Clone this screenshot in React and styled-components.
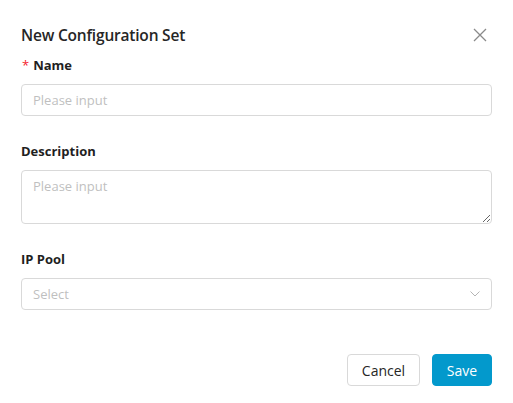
import React from "react";
import styled, { createGlobalStyle } from "styled-components";

const GlobalStyle = createGlobalStyle`
  html, body {
    margin: 0;
    padding: 0;
    background: #ffffff;
  }
  body {
    font-family: "Open Sans", "Noto Sans", sans-serif;
    color: #1f1f1f;
  }
  * {
    box-sizing: border-box;
  }
`;

const App = () => {
  return (
    <>
      <GlobalStyle />
      <Dialog>
        <Header>
          <Title>New Configuration Set</Title>
          <CloseButton aria-label="close">
            <svg width="14" height="14" viewBox="0 0 14 14">
              <path
                d="M1 1 L13 13 M13 1 L1 13"
                stroke="#8a8a8a"
                strokeWidth="1.3"
                fill="none"
              />
            </svg>
          </CloseButton>
        </Header>

        <FormItem>
          <Label required>Name</Label>
          <Input placeholder="Please input" />
        </FormItem>

        <FormItem>
          <Label>Description</Label>
          <TextArea placeholder="Please input" />
        </FormItem>

        <FormItem>
          <Label>IP Pool</Label>
          <SelectBox>
            <SelectText>Select</SelectText>
            <svg width="10" height="6" viewBox="0 0 10 6">
              <path
                d="M0.5 0.5 L5 5 L9.5 0.5"
                stroke="#b5b5b5"
                strokeWidth="1"
                fill="none"
              />
            </svg>
          </SelectBox>
        </FormItem>

        <Footer>
          <Button>Cancel</Button>
          <Button primary>Save</Button>
        </Footer>
      </Dialog>
    </>
  );
};

const Dialog = styled.div`
  width: 513px;
  height: 403px;
  padding: 24px 21px 0 21px;
  display: flex;
  flex-direction: column;
`;

const Header = styled.div`
  display: flex;
  justify-content: space-between;
  align-items: center;
  height: 22px;
  margin-bottom: 9px;
`;

const Title = styled.div`
  font-size: 15.5px;
  font-weight: 600;
  color: #262626;
  letter-spacing: -0.2px;
`;

const CloseButton = styled.button`
  border: none;
  background: none;
  padding: 0;
  margin-right: 5px;
  display: flex;
  cursor: pointer;
`;

const FormItem = styled.div`
  display: flex;
  flex-direction: column;
  margin-bottom: 25px;
`;

const Label = styled.label`
  height: 20px;
  line-height: 20px;
  font-size: 13px;
  font-weight: 700;
  color: #1f1f1f;
  margin-bottom: 9px;
  &::before {
    content: ${(p) => (p.required ? '"*"' : "none")};
    color: #f5222d;
    font-weight: 400;
    margin-right: 4px;
    margin-left: 1px;
  }
`;

const fieldStyle = `
  width: 100%;
  border: 1px solid #d9d9d9;
  border-radius: 4px;
  background: #ffffff;
  font-family: "Open Sans", "Noto Sans", sans-serif;
  font-size: 13px;
  color: #1f1f1f;
  outline: none;
`;

const Input = styled.input`
  ${fieldStyle}
  height: 32px;
  padding: 0 11px;
  &::placeholder {
    color: #bfbfbf;
  }
`;

const TextArea = styled.textarea`
  ${fieldStyle}
  display: block;
  height: 54px;
  padding: 6px 11px;
  resize: vertical;
  &::placeholder {
    color: #bfbfbf;
  }
`;

const SelectBox = styled.div`
  ${fieldStyle}
  height: 32px;
  padding: 0 11px 0 11px;
  display: flex;
  align-items: center;
  justify-content: space-between;
`;

const SelectText = styled.span`
  color: #bfbfbf;
`;

const Footer = styled.div`
  display: flex;
  justify-content: flex-end;
  gap: 12px;
  margin-top: 19px;
`;

const Button = styled.button`
  height: 32px;
  width: ${(p) => (p.primary ? "60px" : "73px")};
  padding: 0;
  border-radius: 4px;
  font-family: "Open Sans", "Noto Sans", sans-serif;
  font-size: 14px;
  cursor: pointer;
  border: 1px solid ${(p) => (p.primary ? "#0399cc" : "#d9d9d9")};
  background: ${(p) => (p.primary ? "#0399cc" : "#ffffff")};
  color: ${(p) => (p.primary ? "#ffffff" : "#262626")};
`;

export default App;
